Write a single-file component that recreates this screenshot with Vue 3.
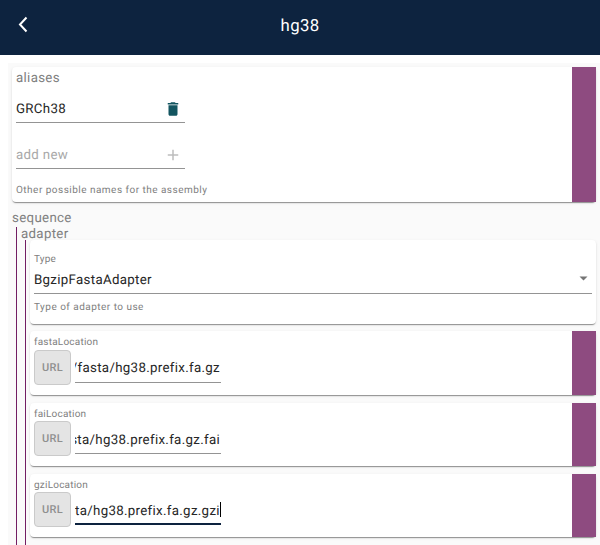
<script setup>
const locations = [
  { name: 'fastaLocation', value: '/fasta/hg38.prefix.fa.gz', size: 'tall' },
  { name: 'faiLocation', value: 'sta/hg38.prefix.fa.gz.fai' },
  { name: 'gziLocation', value: 'ta/hg38.prefix.fa.gz.gzi', focused: true },
]
</script>

<template>
  <div class="page">
    <header class="bar">
      <svg class="back" width="24" height="24" viewBox="0 0 24 24">
        <path d="M15.500 4.500 9 11.500l6.500 7" fill="none" stroke="#fff" stroke-width="2" />
      </svg>
      <h1>hg38</h1>
    </header>
    <main class="panel">
      <section class="card aliases">
        <div class="body">
          <div class="legend">aliases</div>
          <div class="field">
            <span>GRCh38</span>
            <svg width="18" height="18" viewBox="0 0 24 24">
              <path fill="#135560" d="M6 19c0 1.1.9 2 2 2h8c1.100 0 2-.9 2-2V7H6v12zM19 4h-3.500l-1-1h-5l-1 1H5v2h14V4z" />
            </svg>
          </div>
          <div class="field add">
            <span>add new</span>
            <svg width="18" height="18" viewBox="0 0 24 24">
              <path fill="#bdbdbd" d="M19 13h-6v6h-2v-6H5v-2h6V5h2v6h6v2z" />
            </svg>
          </div>
          <div class="help">Other possible names for the assembly</div>
        </div>
        <div class="strip"></div>
      </section>
      <div class="title">sequence</div>
      <div class="branch outer">
        <div class="title sub">adapter</div>
        <div class="branch inner">
          <section class="card type">
            <div class="body">
              <div class="label">Type</div>
              <div class="select">
                <span>BgzipFastaAdapter</span>
                <svg width="20" height="20" viewBox="0 0 20 20">
                  <path d="M7.500 7.500h8l-4 4z" fill="#757575" />
                </svg>
              </div>
              <div class="help">Type of adapter to use</div>
            </div>
          </section>
          <section v-for="l in locations" :key="l.name" class="card location" :class="l.size">
            <div class="body">
              <div class="label">{{ l.name }}</div>
              <div class="row">
                <div class="toggle">URL</div>
                <div class="input" :class="{ focused: l.focused }">
                  <span class="value">{{ l.value }}</span><i v-if="l.focused" class="caret"></i>
                </div>
              </div>
            </div>
            <div class="strip"></div>
          </section>
        </div>
      </div>
    </main>
  </div>
</template>

<style>
body { background: #fff; overflow: hidden; }
</style>

<style scoped>
* { box-sizing: border-box; }
.page {
  height: 545px;
  overflow: hidden;
  font-family: Roboto, sans-serif;
  font-size: 13.300px;
  letter-spacing: 0.310px;
  text-rendering: geometricPrecision;
  color: #262626;
  white-space: nowrap;
}
.bar {
  height: 55px;
  background: #0d233f;
  display: grid;
  grid-template-columns: 24px 1fr 24px;
  align-items: center;
  padding: 0 11px 5px;
}
.bar h1 {
  margin: 0;
  padding-top: 2px;
  color: #fff;
  font-size: 16.800px;
  font-weight: 400;
  line-height: 24px;
  text-align: center;
}
.panel {
  margin: 8px 0 0 8px;
  padding: 4px 4px 0;
  height: 482px;
  background: #fafafa;
}
.card {
  display: flex;
  background: #fff;
  border-radius: 4px;
  box-shadow: 0 2px 1px -1px rgba(0, 0, 0, 0.28), 0 1px 1px rgba(0, 0, 0, 0.14), 0 1px 3px rgba(0, 0, 0, 0.1);
}
.body { flex: 1; padding: 0 4px; min-width: 0; }
.strip { width: 24px; background: #8e4b80; }
.aliases { height: 135px; }
.legend { padding-top: 4px; height: 19px; line-height: 16px; color: #808080; }
.field {
  width: 169px;
  height: 27px;
  margin-top: 10px;
  padding: 0 3px 3px 0;
  border-bottom: 1px solid #949494;
  display: flex;
  align-items: center;
  justify-content: space-between;
}
.field span { padding-top: 4px; }
.field svg { margin-top: 3px; }
.field.add { margin-top: 19px; color: #a9a9a9; }
.help { color: #808080; font-size: 10px; line-height: 18px; height: 16px; letter-spacing: 0.480px; }
.aliases .help { margin-top: 13px; }
.title { margin-top: 8px; height: 17px; line-height: 18px; color: #808080; }
.title.sub { margin: 0; height: 13px; line-height: 16px; padding-left: 4px; }
.branch { border-left: 1px solid #721e63; }
.outer { margin-left: 4px; }
.inner { margin-left: 8px; padding-left: 4px; height: 320px; }
.label { color: #808080; font-size: 10px; height: 14px; line-height: 16px; letter-spacing: 0.210px; }
.type { height: 84px; }
.type .label { margin-top: 12px; }
.select {
  height: 28px;
  padding-bottom: 2px;
  border-bottom: 1px solid #949494;
  display: flex;
  align-items: center;
  justify-content: space-between;
}
.select span { padding-top: 4px; }
.type .help { margin-top: 5px; }
.location { height: 63px; margin-top: 8px; }
.location.tall { height: 64px; margin-top: 7px; }
.location .label { margin-top: 4px; }
.location.tall .label { height: 15px; }
.row { display: flex; gap: 4px; }
.toggle {
  width: 37px;
  height: 35px;
  border: 1px solid #cacaca;
  border-radius: 4px;
  background: #e4e4e4;
  color: #8f8f8f;
  font-size: 11px;
  font-weight: 500;
  line-height: 33px;
  letter-spacing: 0.300px;
  text-align: center;
}
.input {
  width: 146px;
  height: 33px;
  padding-top: 8px;
  line-height: 23px;
  border-bottom: 1px solid #949494;
  overflow: hidden;
  display: flex;
  justify-content: flex-end;
}
.tall .input { line-height: 22px; }
.value { padding-right: 1px; }
.input.focused { border-bottom: 2px solid #0d233f; }
.caret { width: 1px; height: 15px; margin: 2px 1px 0 -1px; background: #000; }
</style>
